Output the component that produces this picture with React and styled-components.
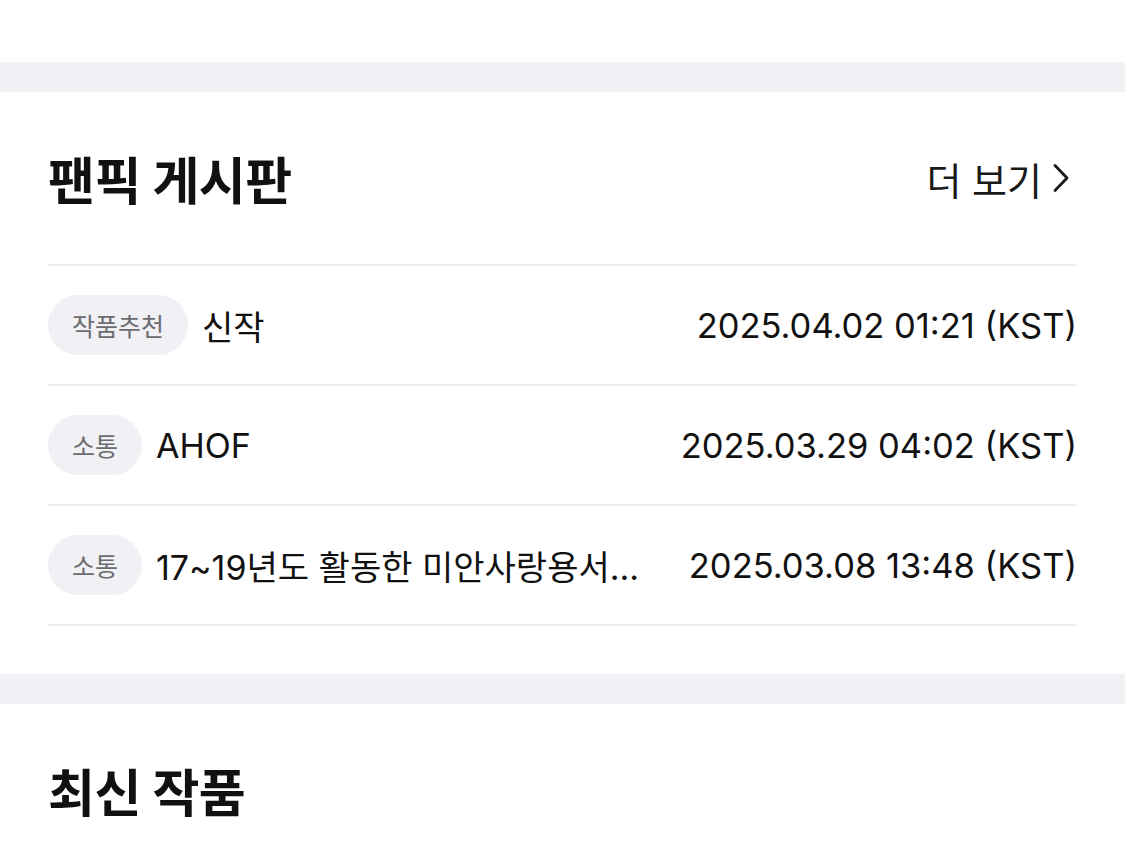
import React from "react";
import styled, { createGlobalStyle } from "styled-components";

const GlobalStyle = createGlobalStyle`
  html, body {
    margin: 0;
    padding: 0;
    background: #ffffff;
  }
  body {
    font-family: "Inter", "Noto Sans CJK KR", sans-serif;
    color: #111111;
    -webkit-font-smoothing: antialiased;
  }
`;

const Page = styled.div`
  width: 1125px;
  display: flex;
  flex-direction: column;
`;

const TopSpace = styled.div`
  height: 62px;
  background: #ffffff;
`;

const Band = styled.div`
  height: 30px;
  background: #f0f0f5;
`;

const Section = styled.section`
  padding: 0 48px ${(p) => (p.$bottom ? `${p.$bottom}px` : "0")};
  background: #ffffff;
`;

const Header = styled.div`
  height: 172px;
  display: flex;
  align-items: center;
  justify-content: space-between;
`;

const Title = styled.h2`
  margin: 0;
  font-size: 51px;
  font-weight: 700;
  letter-spacing: -0.5px;
  color: #111111;
`;

const More = styled.button`
  display: flex;
  align-items: center;
  gap: 10px;
  padding: 0;
  margin-right: 7px;
  border: none;
  background: none;
  font-family: inherit;
  font-size: 38px;
  color: #1a1a1a;
  cursor: pointer;
`;

const List = styled.ul`
  list-style: none;
  margin: 0;
  padding: 0;
  border-top: 2px solid #efeff4;
`;

const Row = styled.li`
  height: 118px;
  display: flex;
  align-items: center;
  border-bottom: 2px solid #efeff4;
`;

const Badge = styled.span`
  flex-shrink: 0;
  height: 60px;
  padding: 0 24px;
  display: flex;
  align-items: center;
  border-radius: 30px;
  background: #f0f0f5;
  font-size: 25px;
  color: #6b6b70;
`;

const PostTitle = styled.span`
  flex: 1;
  min-width: 0;
  margin-left: 14px;
  font-size: 34px;
  color: #111111;
  white-space: nowrap;
  overflow: hidden;
  text-overflow: ellipsis;
`;

const PostDate = styled.span`
  flex-shrink: 0;
  margin-left: 24px;
  font-size: 34.5px;
  color: #111111;
  white-space: nowrap;
`;

const Chevron = () => (
  <svg width="18" height="32" viewBox="0 0 18 32" fill="none">
    <path d="M3 3.5 L15 16 L3 28.5" stroke="#1a1a1a" strokeWidth="2.8" strokeLinecap="round" strokeLinejoin="round" />
  </svg>
);

const posts = [
  { tag: "작품추천", title: "신작", date: "2025.04.02 01:21 (KST)" },
  { tag: "소통", title: "AHOF", date: "2025.03.29 04:02 (KST)" },
  { tag: "소통", title: "17~19년도 활동한 미안사랑용서...", date: "2025.03.08 13:48 (KST)" },
];

export default function App() {
  return (
    <Page>
      <GlobalStyle />
      <TopSpace />
      <Band />
      <Section $bottom={48}>
        <Header>
          <Title>팬픽 게시판</Title>
          <More>
            더 보기
            <Chevron />
          </More>
        </Header>
        <List>
          {posts.map((p, i) => (
            <Row key={i}>
              <Badge>{p.tag}</Badge>
              <PostTitle>{p.title}</PostTitle>
              <PostDate>{p.date}</PostDate>
            </Row>
          ))}
        </List>
      </Section>
      <Band />
      <Section>
        <Header>
          <Title>최신 작품</Title>
        </Header>
      </Section>
    </Page>
  );
}
